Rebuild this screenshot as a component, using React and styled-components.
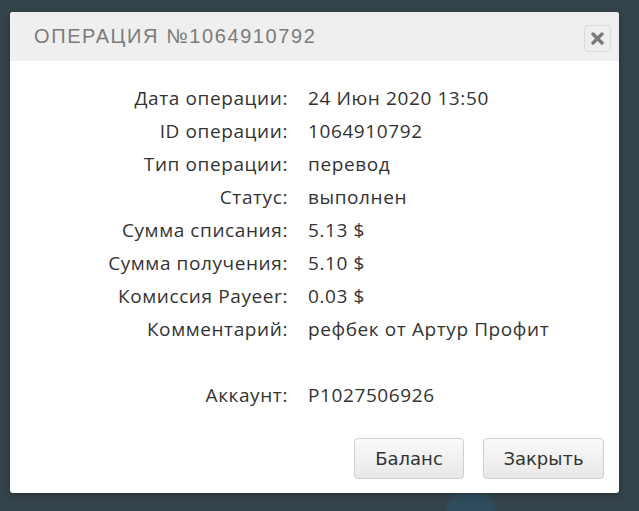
import React from 'react';
import styled, { createGlobalStyle } from 'styled-components';

const COLORS = {
  backdrop: '#35434b',
  header: '#efefef',
  title: '#7b7b7b',
  text: '#333333',
};

const GlobalStyle = createGlobalStyle`
  html, body {
    margin: 0;
    padding: 0;
    background: ${COLORS.backdrop};
    height: 511px;
    overflow: hidden;
  }
`;

const Page = styled.div`
  width: 639px;
  height: 511px;
  padding: 12px 0 0 10px;
  box-sizing: border-box;
  position: relative;
  overflow: hidden;
`;

const Ghost = styled.div`
  position: absolute;
  left: 446px;
  top: 488px;
  width: 50px;
  height: 50px;
  border-radius: 50%;
  background: #2f4c5c;
`;

const Modal = styled.div`
  position: relative;
  z-index: 1;
  width: 609px;
  height: 481px;
  background: #fff;
  border-radius: 3px;
  box-shadow: 0 2px 6px rgba(0, 0, 0, 0.3);
  display: flex;
  flex-direction: column;
  overflow: hidden;
`;

const Header = styled.div`
  height: 49px;
  background: ${COLORS.header};
  display: flex;
  align-items: center;
  justify-content: space-between;
  padding: 0 8px 0 24px;
`;

const Title = styled.h3`
  margin: 0;
  font-family: 'Liberation Sans', Arial, sans-serif;
  font-weight: 400;
  font-size: 20px;
  letter-spacing: 1.6px;
  color: ${COLORS.title};
  text-transform: uppercase;
`;

const CloseButton = styled.button`
  width: 27px;
  height: 27px;
  margin-top: 3px;
  padding: 0;
  border: 1px solid #dcdcdc;
  border-radius: 4px;
  background: #eeeeee;
  display: flex;
  align-items: center;
  justify-content: center;
`;

const Details = styled.div`
  display: grid;
  grid-template-columns: 278px 1fr;
  column-gap: 20px;
  grid-auto-rows: 33px;
  padding-top: 21px;
  font-family: 'Open Sans', sans-serif;
  font-size: 19px;
  letter-spacing: 0.6px;
  color: ${COLORS.text};
`;

const Label = styled.div`
  text-align: right;
  line-height: 33px;
  white-space: nowrap;
`;

const Value = styled.div`
  line-height: 33px;
  white-space: nowrap;
`;

const Spacer = styled.div`
  grid-column: 1 / span 2;
`;

const Footer = styled.div`
  margin-top: auto;
  display: flex;
  justify-content: flex-end;
  gap: 19px;
  padding: 0 15px 14px 0;
`;

const Button = styled.button`
  width: ${p => p.$w}px;
  height: 41px;
  border: 1px solid #cfcfcf;
  border-radius: 4px;
  background: linear-gradient(#fafafa, #e8e8e8);
  font-family: 'DejaVu Sans', Tahoma, sans-serif;
  font-size: 18px;
  color: ${COLORS.text};
  padding: 0;
`;

const rows = [
  ['Дата операции:', '24 Июн 2020 13:50'],
  ['ID операции:', '1064910792'],
  ['Тип операции:', 'перевод'],
  ['Статус:', 'выполнен'],
  ['Сумма списания:', '5.13 $'],
  ['Сумма получения:', '5.10 $'],
  ['Комиссия Payeer:', '0.03 $'],
  ['Комментарий:', 'рефбек от Артур Профит'],
];

const App = () => (
  <Page>
    <GlobalStyle />
    <Ghost />
    <Modal>
      <Header>
        <Title>Операция №1064910792</Title>
        <CloseButton aria-label="close">
          <svg width="13" height="13" viewBox="0 0 13 13">
            <path d="M2 2 L11 11 M11 2 L2 11" stroke="#7a7a7a" strokeWidth="3.4" strokeLinecap="round" />
          </svg>
        </CloseButton>
      </Header>
      <Details>
        {rows.map(([l, v]) => (
          <React.Fragment key={l}>
            <Label>{l}</Label>
            <Value>{v}</Value>
          </React.Fragment>
        ))}
        <Spacer />
        <Label>Аккаунт:</Label>
        <Value>P1027506926</Value>
      </Details>
      <Footer>
        <Button $w={110}>Баланс</Button>
        <Button $w={121}>Закрыть</Button>
      </Footer>
    </Modal>
  </Page>
);

export default App;
